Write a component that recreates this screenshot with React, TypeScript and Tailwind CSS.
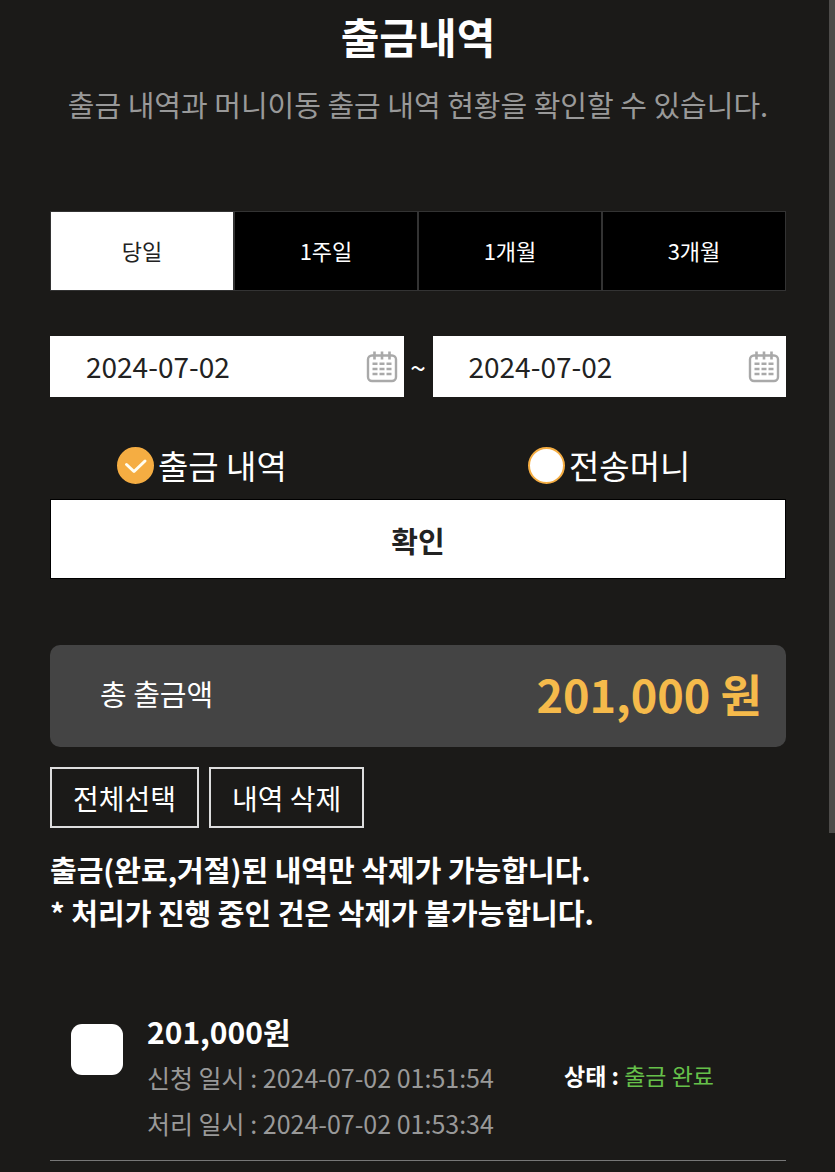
import { useState } from "react";

const periods = ["당일", "1주일", "1개월", "3개월"];

const kinds = [
  { id: "withdraw", label: "출금 내역", indent: "pl-[67px]" },
  { id: "transfer", label: "전송머니", indent: "pl-[110px]" },
];

const history = [
  {
    id: 1,
    amount: "201,000원",
    requestedAt: "2024-07-02 01:51:54",
    processedAt: "2024-07-02 01:53:34",
    status: "출금 완료",
  },
];

function CalendarIcon() {
  return (
    <svg
      viewBox="0 0 32 32"
      className="h-8 w-8 shrink-0"
      fill="none"
      stroke="#a9a9a9"
      strokeWidth="2.4"
      aria-hidden="true">
      <rect x="2" y="4.500" width="28" height="25.500" rx="4" />
      <path d="M8.500 0.500v8M16 0.500v8M23.500 0.500v8" strokeWidth="2.600" />
      <path
        d="M6.500 12.800H11.500M13.500 12.800H18.500M20.500 12.800H25.500M6.500 18H11.500M13.500 18H18.500M20.500 18H25.500M6.500 23H11.500M13.500 23H18.500M20.500 23H25.500"
        strokeWidth="2.600"
      />
    </svg>
  );
}

function DateField({ label }: { label: string }) {
  const [value, setValue] = useState<string>("2024-07-02");

  return (
    <label className="flex h-[61px] min-w-0 flex-1 items-center bg-white pl-9 pr-1.5">
      <input
        type="text"
        aria-label={label}
        value={value}
        onChange={(e) => setValue(e.target.value)}
        className="h-full w-full min-w-0 flex-1 bg-transparent pb-0.5 text-[28px] text-[#222] outline-none"
      />
      <CalendarIcon />
    </label>
  );
}

export default function App() {
  const [period, setPeriod] = useState<string>("당일");
  const [kind, setKind] = useState<string>("withdraw");
  const [selected, setSelected] = useState<number[]>([]);

  const toggle = (id: number) => {
    setSelected((prev) =>
      prev.includes(id) ? prev.filter((item) => item !== id) : [...prev, id]
    );
  };

  return (
    <div className="relative min-h-screen bg-[#1b1a18] pb-3 pl-[50px] pr-[49px] pt-1.5 font-['Noto_Sans_CJK_KR',sans-serif] text-white">
      {/* Scroll thumb */}
      <div className="absolute right-0 top-0 h-[833px] w-1.5 bg-[#4d4b49]" />

      <header className="text-center">
        <h1 className="text-[42px] font-bold leading-[60px]">출금내역</h1>
        <p className="mt-[18px] whitespace-nowrap text-[29px] leading-[40px] text-[#999]">
          출금 내역과 머니이동 출금 내역 현황을 확인할 수 있습니다.
        </p>
      </header>

      <main>
        <form onSubmit={(e) => e.preventDefault()}>
          <div className="mt-[87px] grid grid-cols-4">
            {periods.map((item) => (
              <button
                key={item}
                type="button"
                onClick={() => setPeriod(item)}
                className={
                  item === period
                    ? "h-20 border border-[#333] bg-white pb-0.5 text-[22px] text-[#222]"
                    : "h-20 border border-[#333] bg-black pb-0.5 text-[22px] text-white"
                }>
                {item}
              </button>
            ))}
          </div>

          <div className="mt-[45px] flex items-center">
            <DateField label="시작일" />
            <span className="w-[29px] text-center text-[28px] leading-[40px]">
              ~
            </span>
            <DateField label="종료일" />
          </div>

          <div className="mt-[50px] grid grid-cols-2">
            {kinds.map((item) => (
              <div key={item.id} className={item.indent}>
                <label className="flex h-[37px] items-center gap-1 text-[33px] leading-[37px]">
                  <span className="relative h-[37px] w-[37px] shrink-0">
                    <input
                      type="radio"
                      name="kind"
                      value={item.id}
                      checked={kind === item.id}
                      onChange={() => setKind(item.id)}
                      className="block h-[37px] w-[37px] appearance-none rounded-full border-2 border-[#f5ad42] bg-white checked:bg-[#f5ad42]"
                    />
                    {kind === item.id && (
                      <svg
                        viewBox="0 0 37 37"
                        className="pointer-events-none absolute inset-0"
                        fill="none"
                        stroke="#fffdf0"
                        strokeWidth="3"
                        strokeLinecap="round"
                        strokeLinejoin="round"
                        aria-hidden="true">
                        <path d="M9.500 17.500L17 24.500L28 14" />
                      </svg>
                    )}
                  </span>
                  {item.label}
                </label>
              </div>
            ))}
          </div>

          <button
            type="submit"
            className="mt-[15px] h-20 w-full border border-black bg-white pt-1 text-[29px] font-bold text-[#222]">
            확인
          </button>
        </form>

        <div className="mt-[66px] flex h-[102px] items-center justify-between rounded-[10px] bg-[#444] pb-1 pl-[50px] pr-6">
          <span className="text-[29px]">총 출금액</span>
          <strong className="text-[45px] font-bold text-[#f5ba4b]">
            201,000 원
          </strong>
        </div>

        <div className="mt-5 flex gap-2.5">
          <button
            type="button"
            onClick={() => setSelected(history.map((item) => item.id))}
            className="h-[61px] border-2 border-[#ddd] px-[21px] text-[28px]">
            전체선택
          </button>
          <button
            type="button"
            className="h-[61px] border-2 border-[#ddd] px-[21px] text-[28px]">
            내역 삭제
          </button>
        </div>

        <p className="mt-5 text-[29px] font-bold leading-[43px]">
          출금(완료,거절)된 내역만 삭제가 가능합니다.
          <br />* 처리가 진행 중인 건은 삭제가 불가능합니다.
        </p>

        <ul className="mt-[74px]">
          {history.map((item) => (
            <li
              key={item.id}
              className="flex items-start border-b border-[#777] pb-3.5 pl-[21px]">
              <input
                type="checkbox"
                aria-label={item.amount}
                checked={selected.includes(item.id)}
                onChange={() => toggle(item.id)}
                className="mt-4 h-[51px] w-[52px] shrink-0 appearance-none rounded-[11px] bg-white checked:bg-[#f5ad42]"
              />
              <div className="ml-6 flex-1 text-[25px] leading-[46px] text-[#999]">
                <strong className="block text-[30px] font-bold text-white">
                  {item.amount}
                </strong>
                <p className="whitespace-nowrap">신청 일시 : {item.requestedAt}</p>
                <p className="whitespace-nowrap">처리 일시 : {item.processedAt}</p>
              </div>
              <p className="mr-[72px] mt-11 whitespace-nowrap text-[23px] leading-[46px] text-[#66c04a]">
                <b className="text-white">상태 :</b> {item.status}
              </p>
            </li>
          ))}
        </ul>
      </main>
    </div>
  );
}
